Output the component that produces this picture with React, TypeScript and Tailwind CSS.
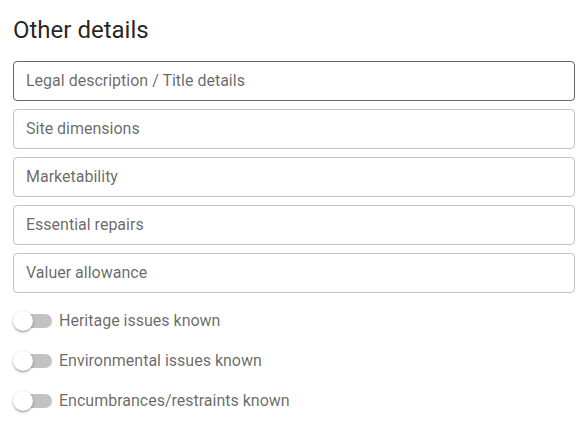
import React from 'react';

const fields = [
  'Legal description / Title details',
  'Site dimensions',
  'Marketability',
  'Essential repairs',
  'Valuer allowance',
];

const toggles = [
  'Heritage issues known',
  'Environmental issues known',
  'Encumbrances/restraints known',
];

export default function App() {
  return (
    <div className="min-h-screen bg-white px-[13px] pt-[14px] font-['Roboto',sans-serif] text-black/[0.87]">
      <h2 className="text-[24px] leading-[32px] font-normal">Other details</h2>

      <div className="mt-[15px] flex flex-col gap-2">
        {fields.map((label, i) => (
          <div
            key={label}
            className={
              'flex h-10 items-center rounded-[4px] border px-3 text-base text-black/60 ' +
              (i === 0 ? 'border-black/[0.6]' : 'border-black/[0.23]')
            }
          >
            {label}
          </div>
        ))}
      </div>

      <div className="mt-2 flex flex-col">
        {toggles.map((label) => (
          <label key={label} className="flex h-10 items-center">
            <span className="relative h-[38px] w-[46px] shrink-0">
              <span className="absolute left-[2px] top-[12px] h-[14px] w-[37px] rounded-full bg-[#c2c2c2]" />
              <span className="absolute left-0 top-[9px] h-5 w-5 rounded-full bg-white shadow-[0_2px_2px_-1px_rgba(0,0,0,0.25),0_1px_2px_0_rgba(0,0,0,0.16),0_1px_4px_0_rgba(0,0,0,0.14)]" />
            </span>
            <span className="text-base text-black/60">{label}</span>
          </label>
        ))}
      </div>
    </div>
  );
}
